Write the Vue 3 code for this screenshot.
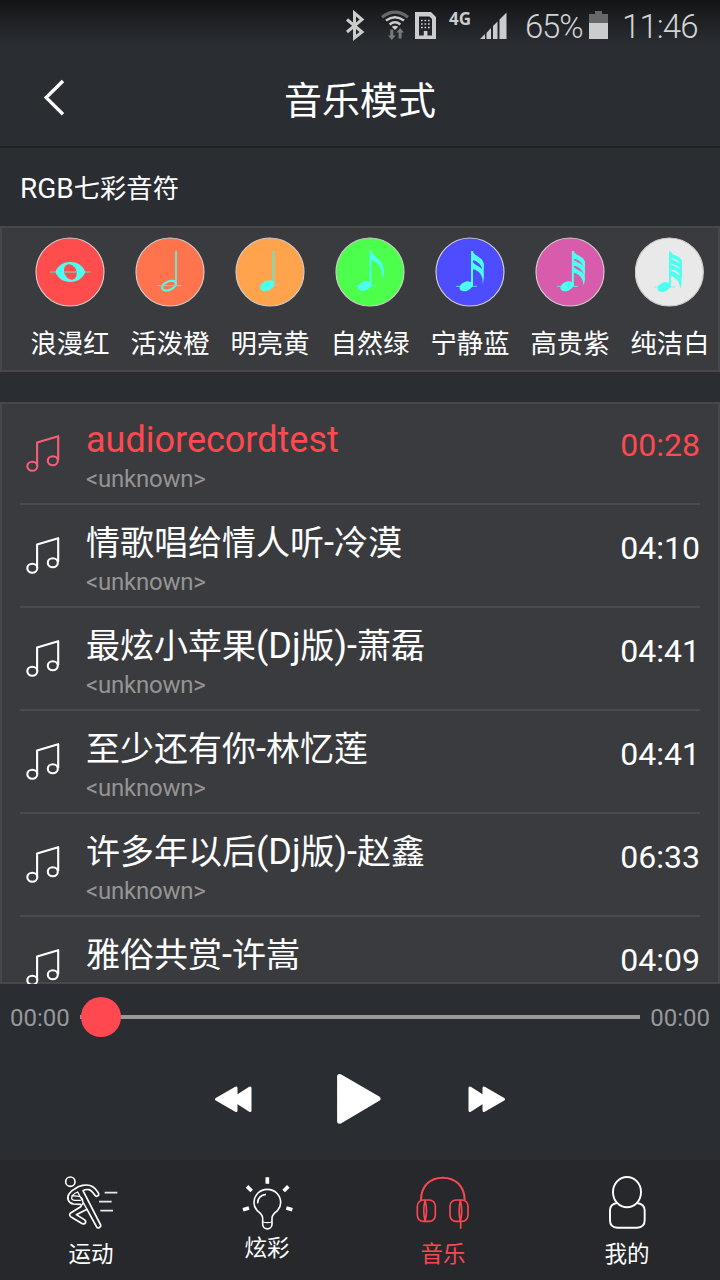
<script setup>
const colors = [
  { name: '浪漫红', fill: '#ff4d4d', kind: 'whole', cx: 210, box: '105 36 210 210' },
  { name: '活泼橙', fill: '#ff734d', kind: 'half', cx: 510, box: '405 36 210 210' },
  { name: '明亮黄', fill: '#ffa34d', kind: 'quarter', cx: 810, box: '705 36 210 210' },
  { name: '自然绿', fill: '#4dff4d', kind: 'flag', flags: 1, cx: 330, shift: 'translate(-4.5 -1)', box: '225 36 210 210' },
  { name: '宁静蓝', fill: '#4d4dff', kind: 'flag', flags: 2, cx: 330, shift: 'translate(0 0)', box: '225 36 210 210' },
  { name: '高贵紫', fill: '#d95bab', kind: 'flag', flags: 3, cx: 330, shift: 'translate(2.5 0)', box: '225 36 210 210' },
  { name: '纯洁白', fill: '#e9e9e9', kind: 'flag', flags: 4, cx: 330, shift: 'translate(-4 2)', box: '227 36 210 210' },
]
const songs = [
  { title: 'audiorecordtest', artist: '<unknown>', time: '00:28', active: true },
  { title: '情歌唱给情人听-冷漠', artist: '<unknown>', time: '04:10' },
  { title: '最炫小苹果(Dj版)-萧磊', artist: '<unknown>', time: '04:41' },
  { title: '至少还有你-林忆莲', artist: '<unknown>', time: '04:41' },
  { title: '许多年以后(Dj版)-赵鑫', artist: '<unknown>', time: '06:33' },
  { title: '雅俗共赏-许嵩', artist: '', time: '04:09' },
]
// Latin runs are set slightly larger than the Chinese characters around them
const runs = (text) => text.match(/[\x20-\x7e]+|[^\x20-\x7e]+/g).map((t) => ({ t, latin: t.charCodeAt(0) < 127 }))
</script>

<template>
  <div class="screen">
    <div class="status">
      <svg class="status-icons" viewBox="0 0 180 50" width="180" height="50">
        <path d="M17 19.5 L32 32 L24.500 38 V13 L32 19.5 L17 32" fill="none" stroke="#cbcccd" stroke-width="3" />
        <g transform="translate(10 0)">
          <g fill="none" stroke="#cbcccd" stroke-width="2.5">
            <path d="M42 17.2 Q55 7 68 17.2" stroke="#66686a" stroke-width="3" />
            <path d="M46 20.6 Q55 13.8 64 20.6" />
            <path d="M49.6 24.4 Q55 20.2 60.4 24.4" />
          </g>
          <path d="M51.8 26.8 Q55 24.5 58.2 26.8 L55 30 Z" fill="#cbcccd" />
          <path d="M50.3 29.5 h3 v6 h2.3 l-3.8 4.5 -3.8 -4.5 h2.3 Z M58.6 38.5 h3 v-6 h2.3 l-3.8 -4.5 -3.8 4.5 h2.3 Z" fill="#77797b" />
          <path fill-rule="evenodd" d="M75 12 H91 L96 17 V39 H75 Z M79 16.5 V35.5 H83.8 V31 H87.4 V35.5 H92 V19 L89.5 16.5 Z" fill="#cbcccd" />
          <path d="M81 20.5 h9 M81 24 h9 M81 27.5 h9" stroke="#cbcccd" stroke-width="1.7" stroke-dasharray="1.7 1.8" />
          <path d="M140 39 L145 34 V39 Z M146.5 33 L151 28 V39 H146.5 Z M153 26 L157.5 21.5 V39 H153 Z M159.5 19.5 L166.5 12.5 V39 H159.5 Z" fill="#cbcccd" />
          <text x="109" y="24.500" class="net">4G</text>
        </g>
      </svg>
      <span class="pct">65%</span>
      <svg class="battery" viewBox="0 0 19 28" width="19" height="28">
        <path d="M6 0 H13 V3 H19 V12 H0 V3 H6 Z" fill="#66686a" />
        <path d="M0 12 H19 V28 H0 Z" fill="#cbcccd" />
      </svg>
      <span class="clock">11:46</span>
    </div>

    <header class="bar">
      <svg class="back" viewBox="0 0 24 38" width="24" height="38"><path d="M21 2 L4.2 18.6 L21 35.2" fill="none" stroke="#fff" stroke-width="3.4" /></svg>
      <h1>音乐模式</h1>
    </header>

    <h2><span class="latin">RGB</span>七彩音符</h2>

    <section class="panel palette">
      <div v-for="c in colors" :key="c.name" class="swatch">
        <svg :viewBox="c.box" width="70" height="70">
          <circle :cx="c.cx" cy="141" r="102" :fill="c.fill" stroke="#d2cccc" stroke-width="3.5" />
          <g v-if="c.kind === 'whole'">
            <path d="M150 141 H272" stroke="#79b8ae" stroke-width="4.5" />
            <path fill-rule="evenodd" fill="#4dfff0" d="M166 141 C174 121 190 111 211 111 C232 111 248 121 256 141 C248 161 232 171 211 171 C190 171 174 161 166 141 Z M199 120 C191 126 190 140 196 151 C203 163 215 168 224 161 C232 155 232 140 226 130 C219 119 207 114 199 120 Z" />
            <path d="M192 141 H230" stroke="#b99b8b" stroke-width="4.5" />
          </g>
          <g v-else-if="c.kind === 'half'">
            <path d="M528 78 V182" stroke="#6fe2cd" stroke-width="6" fill="none" />
            <ellipse cx="507" cy="182" rx="22" ry="12.5" transform="rotate(-24 507 182)" fill="none" stroke="#4dfff0" stroke-width="6" />
            <path d="M471 182 H544" stroke="#7fd6bc" stroke-width="3" />
          </g>
          <g v-else-if="c.kind === 'quarter'">
            <path d="M820.5 78 V182" stroke="#72e2bd" stroke-width="6.5" />
            <path d="M769 181 H836" stroke="#72e2bd" stroke-width="3" />
            <ellipse cx="802" cy="182" rx="23" ry="14.5" transform="rotate(-26 802 182)" fill="#4dfff0" />
          </g>
          <g v-else fill="#4dfff0" :transform="c.shift">
            <path d="M288 184 H351" stroke="#4dfff0" stroke-opacity=".8" stroke-width="3" />
            <path d="M336 78 V184" stroke="#4dfff0" stroke-width="6" />
            <ellipse cx="318" cy="184" rx="20.5" ry="13.5" transform="rotate(-24 318 184)" />
            <path v-if="c.flags === 1" d="M334 79 H339 C342 92 351 94 362 105 C378 121 379 143 371 162 C370 160 371 158 371 154 C370 130 360 112 339 106 Z" />
            <template v-else-if="c.flags === 2">
              <path d="M334 78 H339 C341 90 352 91 364 102 C373 110 373 126 370 140 L369 142 C367 122 354 109 339 106 Z" />
              <path d="M336 106 C341 120 352 121 363 129 C373 138 374 158 368 177 C367 172 369 166 367 160 C364 146 354 135 336 132 Z" />
              <path d="M369 115 V155" stroke="#4dfff0" stroke-width="3" />
            </template>
            <template v-else-if="c.flags === 3">
              <path d="M334 78 H339 C342 89 354 89 365 99 C375 108 374 121 370 130 C365 112 353 103 338 101 Z" />
              <path d="M337 100 C342 112 355 111 365 121 C375 130 374 142 370 151 C365 133 353 124 338 122 Z" />
              <path d="M337 122 C342 134 355 133 365 143 C375 152 374 165 368 181 C367 159 355 146 337 143 Z" />
              <path d="M370 108 V155" stroke="#4dfff0" stroke-width="3" />
            </template>
            <template v-else>
              <path d="M334 78 H339 C342 88 354 88 365 96 C372 102 372 111 370 119 C361 102 350 99 338 97 Z" />
              <path d="M337 95 C344 106 355 105 365 113 C372 119 372 127 370 136 C361 119 350 116 338 114 Z" />
              <path d="M337 113 C344 123 355 122 365 130 C372 136 372 144 370 153 C361 136 350 133 338 131 Z" />
              <path d="M337 130 C344 141 355 140 365 148 C373 156 372 174 367 190 C366 168 354 154 337 151 Z" />
              <path d="M369 102 V158" stroke="#4dfff0" stroke-width="5" />
            </template>
          </g>
        </svg>
        <span>{{ c.name }}</span>
      </div>
    </section>

    <section class="panel list">
      <div v-for="s in songs" :key="s.title" class="row" :class="{ active: s.active }">
        <svg class="note" viewBox="0 0 36 40" width="36" height="40" fill="none" stroke="currentColor" stroke-width="2.1">
          <path d="M12.1 33 V9.6 L33.2 3.2 V27" stroke-linejoin="round" />
          <ellipse cx="7.300" cy="33.300" rx="5" ry="4.500" />
          <ellipse cx="27.800" cy="27.800" rx="5" ry="4.500" />
        </svg>
        <div class="info">
          <div class="title"><span v-for="(r, i) in runs(s.title)" :key="i" :class="{ latin: r.latin }">{{ r.t }}</span></div>
          <div v-if="s.artist" class="artist">{{ s.artist }}</div>
        </div>
        <div class="time">{{ s.time }}</div>
      </div>
    </section>

    <section class="player">
      <div class="seek">
        <span>00:00</span>
        <div class="track"><i class="knob"></i></div>
        <span>00:00</span>
      </div>
      <div class="controls">
        <svg viewBox="0 0 40 32" width="40" height="32" fill="#fff" stroke="#fff" stroke-width="3" stroke-linejoin="round">
          <path d="M37 5 V27.500 L19.5 16.300 Z" /><path d="M23 5 V27.500 L3.500 16.300 Z" />
        </svg>
        <svg viewBox="0 0 48 54" width="48" height="54" fill="#fff" stroke="#fff" stroke-width="5" stroke-linejoin="round">
          <path d="M4.600 4.500 V49.300 L43 26.700 Z" />
        </svg>
        <svg viewBox="0 0 40 32" width="40" height="32" fill="#fff" stroke="#fff" stroke-width="3" stroke-linejoin="round">
          <path d="M3 5 V27.500 L20.5 16.300 Z" /><path d="M17 5 V27.500 L36.500 16.300 Z" />
        </svg>
      </div>
    </section>

    <nav>
      <a>
        <svg viewBox="93 54 180 180" width="60" height="60" fill="none" stroke="#fff" stroke-width="5" stroke-linejoin="round" stroke-linecap="round">
          <circle cx="121" cy="80" r="14" />
          <path d="M134 102 C146 92 168 86 184 93 C194 98 201 107 206 116 C208 122 199 127 195 121 C189 113 184 106 177 104 C171 103 164 104 159 107 L212 210 C214 216 204 222 200 216 L171 163 L139 179 L163 194 C171 200 166 209 157 206 L122 185 C117 181 119 176 123 173 L151 156 C155 153 155 149 151 148 L131 147 C115 145 109 130 117 117 C121 110 127 105 134 102 Z" />
          <path d="M143 111 C132 116 124 122 125 130 C127 139 142 136 151 136 M126 122 L148 124 C158 127 160 137 158 149 M143 111 L171 163" stroke-width="4" />
          <path d="M224 113 H262 M207 140 H245 M211 167 H249" stroke="#e6eaee" stroke-width="5.500" stroke-linecap="butt" />
        </svg>
        <span>运动</span>
      </a>
      <a class="raised">
        <svg viewBox="621 54 180 180" width="60" height="60" fill="none" stroke="#fff" stroke-width="4.8">
          <path d="M698 190 C698 179 689 174 681 166 C675 159 672 151 672 143 C672 121 689 103 712 103 C735 103 752 121 752 143 C752 151 749 159 743 166 C735 174 726 179 726 190 V208 C726 226 698 226 698 208 Z" />
          <path d="M698 201 Q712 205 726 201" stroke-width="3.5" />
          <path d="M683 145 C682 130 693 119 708 118" />
          <g stroke-width="11">
            <path d="M712 67 V86 M651 94 L665 108 M775 94 L761 108 M639 164 L657 159 M787 164 L769 159" />
          </g>
        </svg>
        <span>炫彩</span>
      </a>
      <a class="current">
        <svg viewBox="69 54 180 180" width="60" height="60" fill="none" stroke="#fb4751" stroke-width="5">
          <path d="M93 135 C93 92 121 68 158 68 C195 68 224 92 224 135" stroke-width="6" />
          <rect x="82" y="135" width="54" height="64" rx="18" /><path d="M105 136 Q114 167 105 198 Q98 167 105 136" />
          <rect x="180" y="135" width="54" height="64" rx="18" /><path d="M211 136 Q204 167 211 198 Q219 167 211 136 M212 198 V221" />
        </svg>
        <span>音乐</span>
      </a>
      <a>
        <svg viewBox="621 54 180 180" width="60" height="60" fill="none" stroke="#fff" stroke-width="5.8">
          <ellipse cx="711" cy="111.500" rx="42" ry="45.500" />
          <path d="M681 144 C667 146 660 154 660 166 V196 C660 211 669 218 682 218 H741 C755 218 764 211 764 196 V166 C764 154 756 146 741 144" />
        </svg>
        <span>我的</span>
      </a>
    </nav>
  </div>
</template>

<style>
body { margin: 0; background: #2a2d32; }
</style>

<style scoped>
.screen {
  width: 720px; height: 1280px; overflow: hidden; display: flex; flex-direction: column;
  background: linear-gradient(#111315, #1b1d20 14px, #2a2d32 46px); color: #fff;
  font-family: Roboto, "Noto Sans CJK SC", sans-serif;
}
svg { display: block; flex: none; }
.status { height: 50px; flex: none; display: flex; padding-left: 330px; color: #d2d3d4; font-weight: 300; font-size: 33px; line-height: 54px; }
.net { font: 700 17px "Noto Sans", sans-serif; fill: #cbcccd; }
.pct { width: 64px; padding-left: 15px; letter-spacing: -1.2px; white-space: nowrap; }
.battery { margin-top: 11px; }
.clock { margin-left: 14px; letter-spacing: -.9px; }
.bar { height: 96px; flex: none; border-bottom: 2px solid #1e2022; display: flex; position: relative; justify-content: center; align-items: center; }
.back { position: absolute; left: 42px; top: 29px; }
h1 { margin: 5px 0 0; font-size: 38px; font-weight: 400; line-height: 56px; }
h2 { margin: 0; height: 78px; padding: 3px 0 0 20px; box-sizing: border-box; font-size: 26.3px; font-weight: 400; line-height: 76px; flex: none; }
h2 .latin { font-size: 28px; line-height: 1; }
.panel { background: #3a3b3e; box-shadow: inset 0 0 0 2px #47484a; flex: none; overflow: hidden; }
.palette { height: 146px; display: flex; padding-left: 20px; box-sizing: border-box; }
.swatch { width: 100px; flex: none; display: flex; flex-direction: column; align-items: center; padding-top: 11px; }
.swatch span { font-size: 26.3px; line-height: 38px; margin-top: 18px; white-space: nowrap; }
.list { height: 582px; margin-top: 30px; padding: 0 20px; }
.row { height: 103px; box-sizing: border-box; border-bottom: 2px solid #4a4b4d; display: flex; }
.note { margin: 30px 0 0 5px; }
.active .note { margin-top: 31px; }
.info { flex: 1; padding-left: 25px; }
.title { font-size: 34px; line-height: 44px; height: 44px; margin-top: 16px; white-space: nowrap; }
.title .latin { font-size: 36px; line-height: 1; }
.artist { font-size: 24px; line-height: 30px; color: #949494; margin-top: 2px; letter-spacing: -.22px; }
.time { font-size: 32px; line-height: 44px; margin-top: 21px; }
.active .title, .active .time { color: #ff4850; }
.active .note { color: #f4607a; }
.player { height: 176px; flex: none; }
.seek { height: 66px; display: flex; align-items: center; padding: 0 10px; justify-content: space-between; color: #97989a; font-size: 24px; }
.seek span { padding-top: 2px; }
.track { width: 560px; height: 4px; background: #999; display: flex; align-items: center; }
.knob { width: 40px; height: 40px; border-radius: 50%; background: #ff4850; margin-left: 1px; }
.controls { display: flex; justify-content: space-between; align-items: center; width: 294px; height: 100px; margin: -1px auto 0; }
.controls svg:nth-child(2) { margin: 0 2px 0 0; }
nav { height: 120px; flex: none; background: #27282b; display: grid; grid-template-columns: 176px 176px 176px 192px; padding-left: 3px; }
nav a { display: flex; flex-direction: column; align-items: center; padding-top: 13px; }
nav span { font-size: 22.5px; line-height: 32px; margin-top: 5px; }
.raised span { margin-top: -1px; }
.current { color: #fb4751; }
</style>
